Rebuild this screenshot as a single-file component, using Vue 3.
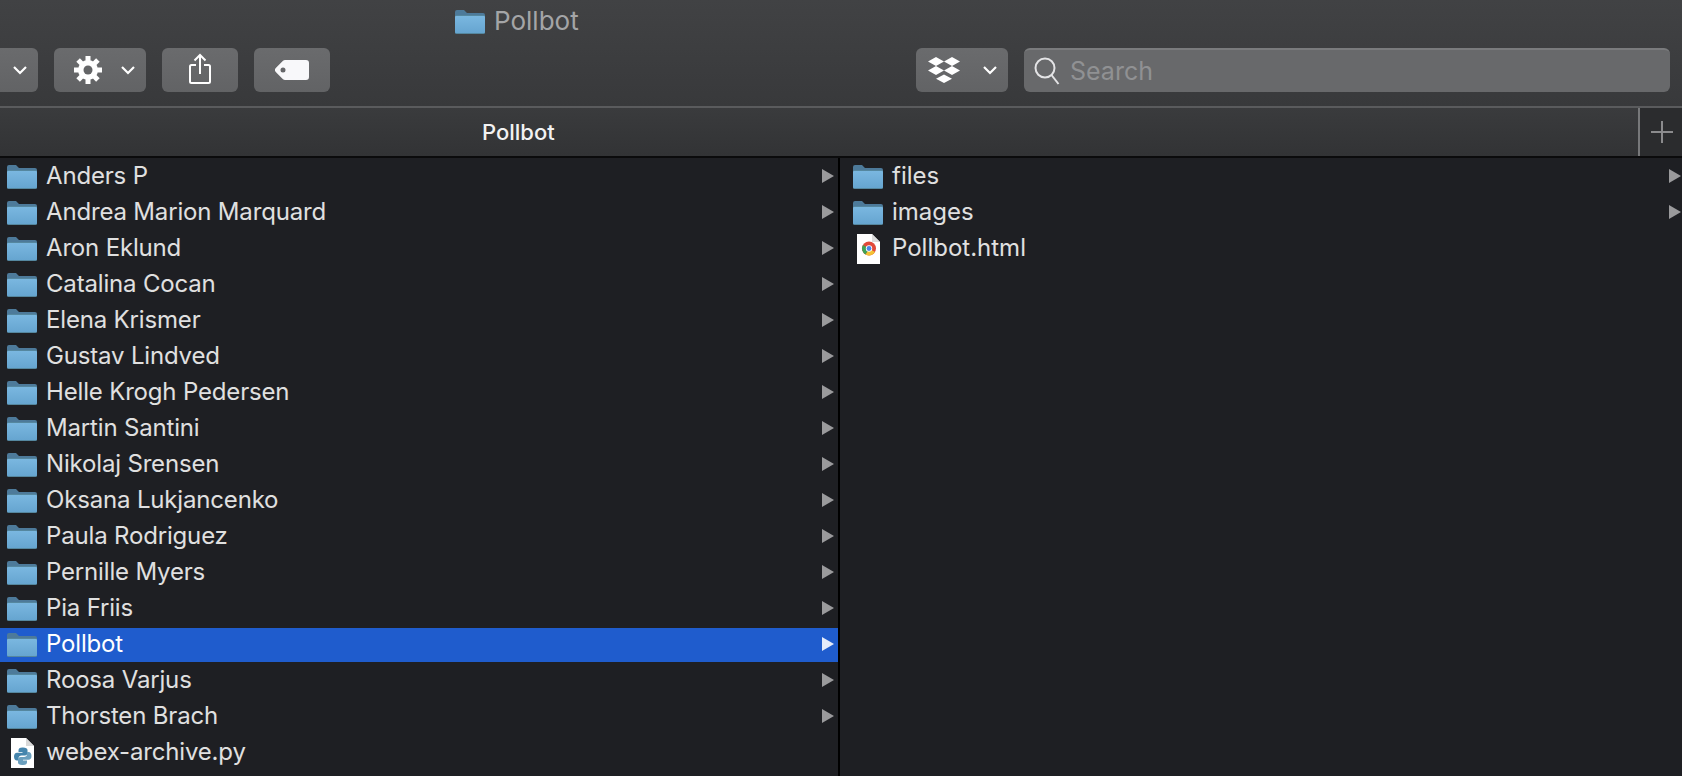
<script setup>
const people = [
  "Anders P",
  "Andrea Marion Marquard",
  "Aron Eklund",
  "Catalina Cocan",
  "Elena Krismer",
  "Gustav Lindved",
  "Helle Krogh Pedersen",
  "Martin Santini",
  "Nikolaj Srensen",
  "Oksana Lukjancenko",
  "Paula Rodriguez",
  "Pernille Myers",
  "Pia Friis",
  "Pollbot",
  "Roosa Varjus",
  "Thorsten Brach",
];
const selected = "Pollbot";
const gearAngles = [0, 45, 90, 135];
</script>

<template>
  <div class="window">
    <header class="titlebar">
      <div class="title">
        <svg class="folder" viewBox="0 0 30 24">
          <defs>
            <linearGradient id="folderBody" x1="0" y1="0" x2="0" y2="1">
              <stop offset="0" stop-color="#7ab7e0" />
              <stop offset="1" stop-color="#66a5d0" />
            </linearGradient>
          </defs>
          <path d="M0 2a2 2 0 0 1 2-2h7l3 3h16a2 2 0 0 1 2 2v4H0z" fill="#4d7a9a" />
          <rect y="5" width="30" height="19" rx="1.5" fill="#55879f" />
          <rect y="6" width="30" height="17" rx="1" fill="url(#folderBody)" />
        </svg>
        <span>Pollbot</span>
      </div>
      <div class="toolbar">
        <div class="btn first">
          <svg class="chev" viewBox="0 0 16 10"><path d="M2 2l6 6 6-6" /></svg>
        </div>
        <div class="btn gear-btn">
          <svg class="gear" viewBox="-14 -14 28 28">
            <rect v-for="a in gearAngles" :key="a" x="-2.500" y="-14" width="5" height="28" :transform="`rotate(${a})`" fill="#fff" />
            <circle r="10" fill="#fff" />
            <circle r="4.500" fill="#646567" />
          </svg>
          <svg class="chev" viewBox="0 0 16 10"><path d="M2 2l6 6 6-6" /></svg>
        </div>
        <div class="btn plain">
          <svg class="share" viewBox="0 0 24 32">
            <path d="M8 12H3.500a1.500 1.500 0 0 0-1.500 1.500v15a1.500 1.500 0 0 0 1.500 1.500h17a1.500 1.500 0 0 0 1.500-1.500v-15a1.500 1.500 0 0 0-1.500-1.500H16M12 21V2M6.500 7.500L12 2l5.500 5.500" />
          </svg>
        </div>
        <div class="btn plain">
          <svg class="tag" viewBox="0 0 34 20">
            <path fill-rule="evenodd" d="M10 0h21a3 3 0 0 1 3 3v14a3 3 0 0 1-3 3H10a3 3 0 0 1-2-.8L1 12.200a3 3 0 0 1 0-4.400L8 .8A3 3 0 0 1 10 0zM8 7.500a2.500 2.500 0 1 0 0 5 2.500 2.500 0 0 0 0-5z" fill="#f8f8fa" />
          </svg>
        </div>
        <div class="spacer"></div>
        <div class="btn dropbox-btn">
          <svg class="dropbox" viewBox="0 0 32 26">
            <path d="M8 0l8 4.500-8 4.500-8-4.500zM24 0l8 4.500-8 4.500-8-4.500zM8 9l8 4.500-8 4.500-8-4.500zM24 9l8 4.500-8 4.500-8-4.500zM16 17.500l8 4.250-8 4.250-8-4.250z" fill="#fff" />
          </svg>
          <svg class="chev" viewBox="0 0 16 10"><path d="M2 2l6 6 6-6" /></svg>
        </div>
        <div class="search">
          <svg class="glass" viewBox="0 0 26 28">
            <circle cx="11" cy="11" r="9.500" />
            <path d="M17.500 18l7 9" />
          </svg>
          <span>Search</span>
        </div>
      </div>
    </header>

    <div class="tabbar">
      <div class="tab">Pollbot</div>
      <div class="newtab">
        <svg viewBox="0 0 22 22"><path d="M11 0v22M0 11h22" /></svg>
      </div>
    </div>

    <main class="columns">
      <section class="col left">
        <div v-for="name in people" :key="name" class="row" :class="{ selected: name === selected }">
          <svg class="folder" viewBox="0 0 30 24">
            <path d="M0 2a2 2 0 0 1 2-2h7l3 3h16a2 2 0 0 1 2 2v4H0z" fill="#4d7a9a" />
            <rect y="5" width="30" height="19" rx="1.5" fill="#55879f" />
            <rect y="6" width="30" height="17" rx="1" fill="url(#folderBody)" />
          </svg>
          <span class="name">{{ name }}</span>
          <i class="arrow"></i>
        </div>
        <div class="row">
          <span class="file">
            <svg viewBox="0 0 23 30">
              <path d="M0 0h15l8 8v22H0z" fill="#fff" />
              <path d="M15 0l8 8h-8z" fill="#d9d9d9" />
              <path d="M11.500 9.500c-3 0-4 1.200-4 2.800v1.700h4v.8H6c-1.800 0-3 1.300-3 3.800s1.200 3.900 3 3.900h1.500v-2.200c0-1.700 1.400-2.800 3-2.800h3.500c1.400 0 2.500-1 2.500-2.500v-3c0-1.500-1.700-2.500-4.500-2.500z" fill="#4585ad" />
              <path d="M12 27c3 0 4-1.200 4-2.800v-1.700h-4v-.8h5.500c1.800 0 3-1.300 3-3.800s-1.200-3.900-3-3.900H16v2.200c0 1.700-1.400 2.800-3 2.800H9.500c-1.400 0-2.500 1-2.500 2.500v3c0 1.500 1.700 2.800 5 2.500z" fill="#6a9fbe" />
            </svg>
          </span>
          <span class="name">webex-archive.py</span>
        </div>
      </section>

      <section class="col right">
        <div v-for="name in ['files', 'images']" :key="name" class="row">
          <svg class="folder" viewBox="0 0 30 24">
            <path d="M0 2a2 2 0 0 1 2-2h7l3 3h16a2 2 0 0 1 2 2v4H0z" fill="#4d7a9a" />
            <rect y="5" width="30" height="19" rx="1.5" fill="#55879f" />
            <rect y="6" width="30" height="17" rx="1" fill="url(#folderBody)" />
          </svg>
          <span class="name">{{ name }}</span>
          <i class="arrow"></i>
        </div>
        <div class="row">
          <span class="file">
            <svg viewBox="0 0 23 30">
              <path d="M0 0h15l8 8v22H0z" fill="#fff" />
              <path d="M15 0l8 8h-8z" fill="#dcdcdc" />
              <circle cx="12" cy="14.500" r="7" fill="#e0493a" />
              <path d="M12 14.500l6.060 3.500A7 7 0 0 1 8.500 20.560z" fill="#f4c233" />
              <path d="M12 14.500L8.500 20.560A7 7 0 0 1 5.940 11z" fill="#3fa356" />
              <circle cx="12" cy="14.500" r="3.200" fill="#fff" />
              <circle cx="12" cy="14.500" r="2.400" fill="#4a86e8" />
            </svg>
          </span>
          <span class="name">Pollbot.html</span>
        </div>
      </section>
    </main>
  </div>
</template>

<style scoped>
.window {
  width: 1682px;
  height: 776px;
  overflow: hidden;
  display: flex;
  flex-direction: column;
  background: #1e1f23;
  font-family: Inter, "Noto Sans", sans-serif;
}
.titlebar {
  height: 106px;
  box-sizing: border-box;
  background: linear-gradient(#414244, #38393b);
  display: flex;
  flex-direction: column;
}
.title {
  height: 48px;
  padding: 8px 0 0 455px;
  box-sizing: border-box;
  display: flex;
  align-items: flex-start;
  gap: 9px;
  font-size: 26px;
  line-height: 26px;
  color: #a4a5a7;
}
.title .folder {
  margin: 2px 0 0;
}
.toolbar {
  display: flex;
  gap: 16px;
  padding-right: 12px;
}
.spacer {
  flex: 1;
}
.btn {
  height: 44px;
  border-radius: 6px;
  background: linear-gradient(#6a6b6d, #626365);
  display: flex;
  align-items: center;
  justify-content: center;
}
.first {
  width: 38px;
  border-radius: 0 6px 6px 0;
  padding-left: 2px;
  box-sizing: border-box;
}
.gear-btn {
  width: 92px;
  gap: 18px;
  padding-left: 10px;
  box-sizing: border-box;
}
.plain {
  width: 76px;
}
.dropbox-btn {
  width: 92px;
  gap: 22px;
  padding-left: 2px;
  box-sizing: border-box;
}
.chev {
  width: 16px;
  height: 10px;
  fill: none;
  stroke: #fff;
  stroke-width: 2.200;
}
.gear {
  width: 28px;
  height: 28px;
}
.share {
  width: 24px;
  height: 32px;
  margin-top: -2px;
  fill: none;
  stroke: #fff;
  stroke-width: 2;
}
.tag {
  width: 34px;
  height: 20px;
}
.dropbox {
  width: 32px;
  height: 26px;
}
.search {
  width: 646px;
  height: 44px;
  box-sizing: border-box;
  border-radius: 6px;
  border-top: 2px solid #7a7b7d;
  background: #68696b;
  display: flex;
  align-items: center;
  padding-left: 10px;
  gap: 10px;
  font-size: 25px;
  color: #909193;
}
.glass {
  width: 26px;
  height: 28px;
  fill: none;
  stroke: #e4e4e6;
  stroke-width: 2;
}
.tabbar {
  height: 50px;
  box-sizing: border-box;
  border-top: 2px solid #5a5b5d;
  background: linear-gradient(#3a3b3d, #323335);
  display: flex;
}
.tab {
  flex: 1;
  padding-left: 482px;
  line-height: 48px;
  font-size: 22px;
  font-weight: 500;
  color: #f2f2f2;
}
.newtab {
  width: 44px;
  box-sizing: border-box;
  border-left: 2px solid #77787a;
  background: #2b2c2e;
  display: flex;
  align-items: center;
  justify-content: center;
}
.newtab svg {
  width: 22px;
  height: 22px;
  margin-right: -2px;
  fill: none;
  stroke: #8b8b8d;
  stroke-width: 2;
}
.columns {
  flex: 1;
  min-height: 0;
  border-top: 2px solid #0b0b0c;
  display: grid;
  grid-template-columns: 840px 1fr;
}
.col {
  overflow: hidden;
}
.left {
  border-right: 2px solid #000;
}
.row {
  height: 34px;
  margin-top: 2px;
  display: flex;
  align-items: center;
  font-size: 24px;
  letter-spacing: -0.17px;
  color: #e0e0e0;
}
.left .row {
  padding: 0 4px 0 7px;
}
.right .row {
  padding: 0 1px 0 13px;
  letter-spacing: 0;
}
.row.selected {
  background: #1f5ccd;
  color: #fff;
}
.folder {
  width: 30px;
  height: 24px;
  flex: none;
}
.name {
  margin-left: 9px;
  flex: 1;
  margin-top: -4px;
}
.arrow {
  width: 0;
  height: 0;
  margin-top: -2px;
  border-left: 12px solid #9a9a9c;
  border-top: 7px solid transparent;
  border-bottom: 7px solid transparent;
}
.selected .arrow {
  border-left-color: #e4ebfa;
}
.file {
  width: 30px;
  height: 30px;
  flex: none;
  display: flex;
  justify-content: center;
}
.file svg {
  width: 23px;
  height: 30px;
}
</style>

<style>
html,
body {
  background: #1e1f23;
}
</style>
